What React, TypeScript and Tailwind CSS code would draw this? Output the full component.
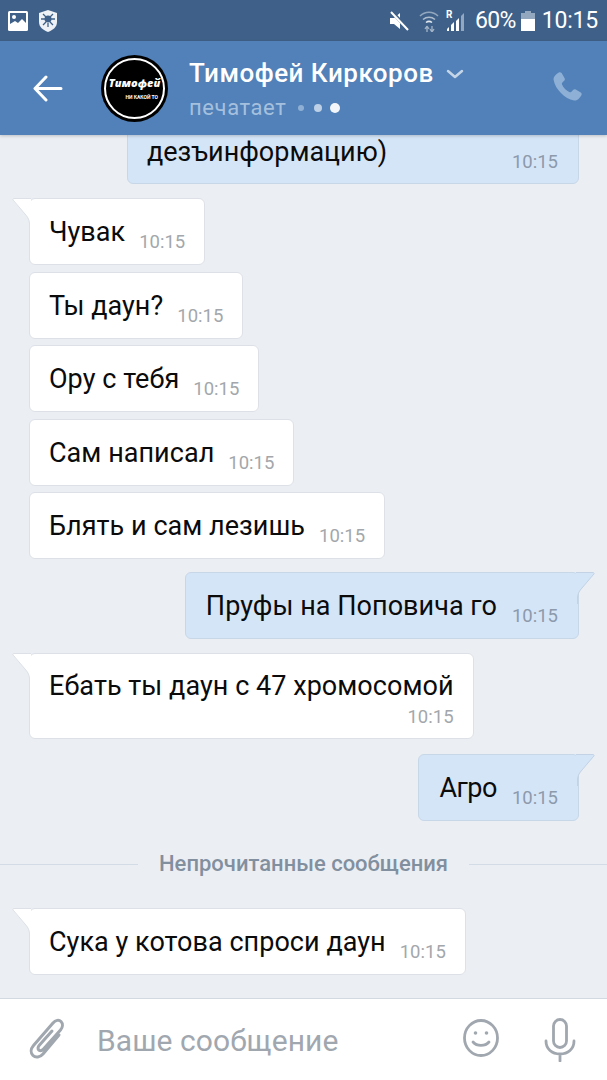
import React from "react";

function Tail({ side, out }: { side: "left" | "right"; out: boolean }) {
  const fill = out ? "#d5e5f8" : "#ffffff";
  const stroke = out ? "#c3d2e4" : "#dde1e7";
  if (side === "left") {
    return (
      <svg width="20" height="32" viewBox="0 0 20 32" className="absolute left-[-19px] top-[-1px]">
        <path d="M20 1H3c-1 0-1.500.8-.8 1.600L14 16c2.500 2.800 4 5 4.500 9v7H20z" fill={fill} />
        <path d="M20 .5H3C2 .5 1.500 1.300 2.200 2.100L14 16c2.500 2.800 4 5 4.500 9v7" fill="none" stroke={stroke} strokeWidth="1" />
      </svg>
    );
  }
  return (
    <svg width="20" height="32" viewBox="0 0 20 32" className="absolute right-[-18px] top-[-1px]">
      <path d="M0 1h17c1 0 1.500.8.800 1.600L6 16c-2.500 2.800-4 5-4.500 9v7H0z" fill={fill} />
      <path d="M0 .5h17c1 0 1.500.8.800 1.600L6 16c-2.500 2.800-4 5-4.500 9v7" fill="none" stroke={stroke} strokeWidth="1" />
    </svg>
  );
}

function Incoming({ text, tail, mt }: { text: string; tail?: boolean; mt: string }) {
  return (
    <div className={`relative self-start shrink-0 ml-[29px] bg-white rounded-[6px] border border-[#dde1e7] h-[67px] pl-[19px] pr-[19px] flex ${mt}`}>
      {tail && <Tail side="left" out={false} />}
      <span className="text-[27px] leading-[30px] tracking-[0.04px] text-[#0b0b0b] mt-[18px] whitespace-nowrap">{text}</span>
      <span className="text-[18.500px] leading-[22px] text-[#a3a7ab] ml-[14px] mt-[32px]">10:15</span>
    </div>
  );
}

function Outgoing({ text, mt, tight }: { text: string; mt: string; tight?: boolean }) {
  return (
    <div className={`relative self-end shrink-0 mr-[28px] bg-[#d5e5f8] rounded-[6px] border border-[#c8d7e8] h-[67px] pl-[20px] pr-[20px] flex ${mt}`}>
      <Tail side="right" out />
      <span className={`text-[27px] leading-[30px] text-[#0b0b0b] mt-[18px] whitespace-nowrap ${tight ? "tracking-[-0.5px]" : "tracking-[0.04px]"}`}>{text}</span>
      <span className="text-[18.500px] leading-[22px] text-[#8c9aab] ml-[15px] mt-[32px]">10:15</span>
    </div>
  );
}

export default function App() {
  return (
    <div className="w-[607px] h-[1080px] flex flex-col bg-[#ebeff4] overflow-hidden font-['Roboto',sans-serif]">
      {/* Status bar */}
      <div className="h-[41px] shrink-0 bg-[#3f6189] flex items-center pl-[8px] pr-[9px] text-white">
        <svg width="20" height="20" viewBox="0 0 20 20">
          <rect width="20" height="20" rx="1.500" fill="#fff" />
          <rect x="2" y="2" width="16" height="14" fill="#3f6189" />
          <circle cx="6" cy="6" r="2" fill="#fff" />
          <path d="M2 16v-3l5-3 3 2 4-4 4 4v4z" fill="#fff" />
        </svg>
        <svg width="22" height="24" viewBox="0 0 22 24" className="ml-[9px]">
          <path d="M11 1l9 3v9c0 5-4 8-9 10-5-2-9-5-9-10V4z" fill="#eef2f6" />
          <circle cx="11" cy="10" r="3.500" fill="#3f6189" />
          <path d="M6 5l3 3M16 5l-3 3M4 10h4M18 10h-4M6 16l3-3M16 16l-3-3M11 14v4" stroke="#3f6189" strokeWidth="1.300" />
        </svg>
        <div className="flex-1" />
        <svg width="20" height="20" viewBox="0 0 20 20">
          <path d="M0 7h4l6-5v16l-6-5H0z" fill="#fff" />
          <path d="M2 1l17 18" stroke="#3f6189" strokeWidth="3.500" />
          <path d="M1 1l17 18" stroke="#fff" strokeWidth="2" />
        </svg>
        <svg width="20" height="22" viewBox="0 0 20 22" className="ml-[9px]" fill="none">
          <path d="M1 6c5-5 13-5 18 0" stroke="#93a7bf" strokeWidth="1.500" />
          <path d="M4 9.500c3.500-3 8.500-3 12 0" stroke="#aebccd" strokeWidth="1.500" />
          <path d="M7 12.500c2-1.500 4-1.500 6 0" stroke="#e3e9ef" strokeWidth="1.500" />
          <path d="M8 16l-2 3M8 16l2 3M8 16v6M13 22v-6M13 22l-2-3M13 22l2-3" stroke="#a3b3c6" strokeWidth="1.300" />
        </svg>
        <div className="relative w-[21px] h-[20px] ml-[7px]">
          <span className="absolute left-0 top-[-2px] text-[10px] leading-[11px] font-bold">R</span>
          <svg width="21" height="20" viewBox="0 0 21 20" className="absolute inset-0">
            <path d="M1 20v-2l2-2v4z" fill="#fff" />
            <path d="M5 20v-6l3-3v9z" fill="#fff" />
            <path d="M10 20V10l3-3v13z" fill="#fff" />
            <path d="M15 20V5l3-3v18z" fill="#93a7bf" />
          </svg>
        </div>
        <span className="text-[23px] leading-[28px] ml-[8px] tracking-[-0.7px]">60%</span>
        <svg width="14" height="20" viewBox="0 0 14 20" className="ml-[5px]">
          <path d="M0 2h4V0h6v2h4v18H0z" fill="#93a7bf" />
          <path d="M0 8h14v12H0z" fill="#fff" />
        </svg>
        <span className="text-[23px] leading-[28px] ml-[7px] tracking-[-0.2px]">10:15</span>
      </div>

      {/* Header */}
      <div className="h-[94px] shrink-0 bg-[#5181b8] flex items-center relative z-10 shadow-[0_1px_3px_rgba(0,0,0,0.2)]">
        <svg width="32" height="28" viewBox="0 0 32 28" className="ml-[32px] mb-[1px]" fill="none" stroke="#fff" strokeWidth="3" strokeLinecap="round" strokeLinejoin="round">
          <path d="M29 14.500H4M14 3L3 14.500 14 26" />
        </svg>
        <div className="ml-[37px] w-[67px] h-[67px] rounded-full bg-black flex items-center justify-center shrink-0">
          <div className="w-[61px] h-[61px] rounded-full border-2 border-white flex flex-col items-center justify-center">
            <span className="text-[11px] leading-[12px] font-extrabold italic text-white font-['Open_Sans',sans-serif] mt-[1px]">Тимофей</span>
            <span className="text-[5px] leading-[6px] font-bold text-white self-end mr-[5px] mt-[5px]">НИ КАКОЙ ТО</span>
          </div>
        </div>
        <div className="ml-[21px] flex flex-col h-[67px] pt-[3px]">
          <div className="flex items-center">
            <span className="text-[26px] leading-[30px] font-medium text-white tracking-[0.5px] whitespace-nowrap">Тимофей Киркоров</span>
            <svg width="18" height="10" viewBox="0 0 18 10" className="ml-[12px] mt-[2px]" fill="none" stroke="#c5d5e8" strokeWidth="2.500" strokeLinecap="round" strokeLinejoin="round">
              <path d="M2 2l7 6 7-6" />
            </svg>
          </div>
          <div className="flex items-center mt-[7px]">
            <span className="text-[22px] leading-[26px] text-[#a5c0de] tracking-[0.6px]">печатает</span>
            <span className="w-[6px] h-[6px] rounded-full bg-[#8fb0d4] ml-[12px]" />
            <span className="w-[8px] h-[8px] rounded-full bg-[#bdd0e6] ml-[10px]" />
            <span className="w-[10px] h-[10px] rounded-full bg-[#f2f6fa] ml-[8px]" />
          </div>
        </div>
        <div className="flex-1" />
        <svg width="36" height="36" viewBox="0 0 24 24" className="mr-[22px] mb-[2px]" fill="#8fb0d6">
          <path d="M6.600 2.300c.6-.4 1.400-.2 1.800.4l2 3.400c.3.500.2 1.200-.2 1.600L8.800 9.200c-.3.300-.3.700-.2 1 .9 2.200 2.900 4.300 5.200 5.300.3.100.7.100 1-.2l1.400-1.400c.4-.4 1.100-.5 1.600-.2l3.400 2c.6.400.8 1.200.4 1.800-.9 1.500-2.600 3.900-4.900 3.500C10.500 19.800 4.200 13.500 3.100 7.300 2.700 5 5.100 3.200 6.600 2.300z" />
        </svg>
      </div>

      {/* Messages */}
      <div className="flex-1 min-h-0 overflow-hidden flex flex-col justify-end pb-[23px]">
        <div className="relative self-end shrink-0 mr-[28px] w-[452px] bg-[#d5e5f8] rounded-[6px] border border-[#c8d7e8] h-[100px] pl-[19px] pr-[20px] flex items-end justify-between pb-[10px]">
          <span className="text-[27px] leading-[30px] text-[#0b0b0b] mb-[6px]">дезъинформацию)</span>
          <span className="text-[18.500px] leading-[22px] text-[#8c9aab]">10:15</span>
        </div>
        <Incoming text="Чувак" tail mt="mt-[14px]" />
        <Incoming text="Ты даун?" mt="mt-[7px]" />
        <Incoming text="Ору с тебя" mt="mt-[6px]" />
        <Incoming text="Сам написал" mt="mt-[7px]" />
        <Incoming text="Блять и сам лезишь" mt="mt-[6px]" />
        <Outgoing text="Пруфы на Поповича го" mt="mt-[13px]" />
        <div className="relative self-start shrink-0 ml-[29px] mt-[14px] bg-white rounded-[6px] border border-[#dde1e7] h-[86px] pl-[19px] pr-[19px] flex flex-col">
          <Tail side="left" out={false} />
          <span className="text-[27px] leading-[30px] tracking-[0.04px] text-[#0b0b0b] mt-[17px] whitespace-nowrap">Ебать ты даун с 47 хромосомой</span>
          <span className="text-[18.500px] leading-[22px] text-[#a3a7ab] self-end mt-[5px]">10:15</span>
        </div>
        <Outgoing text="Агро" tight mt="mt-[15px]" />
        <div className="flex items-center shrink-0 mt-[32px] h-[22px]">
          <div className="w-[138px] h-px bg-[#d3dce6]" />
          <span className="flex-1 text-center text-[22px] leading-[22px] font-medium text-[#828f9f] whitespace-nowrap">Непрочитанные сообщения</span>
          <div className="w-[138px] h-px bg-[#d3dce6]" />
        </div>
        <Incoming text="Сука у котова спроси даун" tail mt="mt-[33px]" />
      </div>

      {/* Input */}
      <div className="h-[82px] shrink-0 bg-white border-t border-[#d3d9e0] flex items-center">
        <svg width="36" height="42" viewBox="0 0 36 42" className="ml-[29px] mb-[1px]" fill="none" stroke="#a1a7af" strokeWidth="3" strokeLinecap="round" strokeLinejoin="round">
          <path d="M30 17L14 36c-3 3.500-7.500 4-10 1.500S1.500 31 4.500 27.500L24 5c2.500-3 6-3.500 8-1.500s2 5.500-.5 8.500L14.500 31c-1.500 1.700-3.500 2-4.700 1s-1-3 .5-4.700L23 13" />
        </svg>
        <span className="ml-[32px] text-[30px] leading-[34px] tracking-[0.08px] text-[#a1a7af] mt-[2px] whitespace-nowrap">Ваше сообщение</span>
        <div className="flex-1" />
        <svg width="38" height="38" viewBox="0 0 38 38" className="mb-[3px]" fill="none" stroke="#a1a7af" strokeWidth="2.800" strokeLinecap="round">
          <ellipse cx="19" cy="19" rx="16.500" ry="17.500" />
          <path d="M11 23c4 4.500 12 4.500 16 0" />
          <circle cx="13.500" cy="14" r="1.800" fill="#a1a7af" stroke="none" />
          <circle cx="24.500" cy="14" r="1.800" fill="#a1a7af" stroke="none" />
        </svg>
        <svg width="32" height="44" viewBox="0 0 32 44" className="ml-[44px] mr-[31px]" fill="none" stroke="#a1a7af" strokeWidth="2.800" strokeLinecap="round">
          <rect x="9.500" y="1.500" width="13" height="28" rx="6.500" />
          <path d="M2 23c0 8 6 13 14 13s14-5 14-13M16 36v7" />
        </svg>
      </div>
    </div>
  );
}
